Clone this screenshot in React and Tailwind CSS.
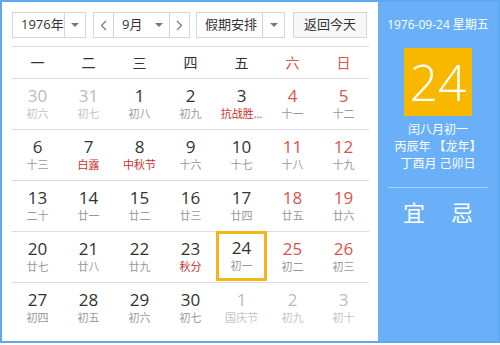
import React from "react";

const weekdays = ["一", "二", "三", "四", "五", "六", "日"];

// n: day number, l: lunar text, m: muted (other month), f: festival (red lunar)
const rows = [
    [{ n: 30, l: "初六", m: true }, { n: 31, l: "初七", m: true }, { n: 1, l: "初八" }, { n: 2, l: "初九" }, { n: 3, l: "抗战胜…", f: true }, { n: 4, l: "十一" }, { n: 5, l: "十二" }],
    [{ n: 6, l: "十三" }, { n: 7, l: "白露", f: true }, { n: 8, l: "中秋节", f: true }, { n: 9, l: "十六" }, { n: 10, l: "十七" }, { n: 11, l: "十八" }, { n: 12, l: "十九" }],
    [{ n: 13, l: "二十" }, { n: 14, l: "廿一" }, { n: 15, l: "廿二" }, { n: 16, l: "廿三" }, { n: 17, l: "廿四" }, { n: 18, l: "廿五" }, { n: 19, l: "廿六" }],
    [{ n: 20, l: "廿七" }, { n: 21, l: "廿八" }, { n: 22, l: "廿九" }, { n: 23, l: "秋分", f: true }, { n: 24, l: "初一", today: true }, { n: 25, l: "初二" }, { n: 26, l: "初三" }],
    [{ n: 27, l: "初四" }, { n: 28, l: "初五" }, { n: 29, l: "初六" }, { n: 30, l: "初七" }, { n: 1, l: "国庆节", m: true }, { n: 2, l: "初九", m: true }, { n: 3, l: "初十", m: true }],
];

const Caret = () => <span className="w-0 h-0 border-l-[4px] border-r-[4px] border-t-[4px] border-l-transparent border-r-transparent border-t-[#777]"></span>;

const DayCell = ({ d, col }) => {
    const weekend = col >= 5;
    let numColor = "text-[#333]";
    if (d.m) numColor = "text-[#bbb]";
    else if (weekend) numColor = "text-[#d9544f]";
    let lunarColor = "text-[#999]";
    if (d.m) lunarColor = "text-[#c4c4c4]";
    else if (d.f) lunarColor = "text-[#c9302c]";
    return (
        <div className={`flex flex-col items-center justify-center h-full ${d.today ? "border-[3px] border-[#f3b51a] -mt-px" : ""}`}>
            <div className={`text-[17px] leading-[20px] ${numColor}`}>{d.n}</div>
            <div className={`text-[11px] leading-[16px] whitespace-nowrap ${lunarColor}`}>{d.l}</div>
        </div>
    );
};

const App = () => {
    return (
        <div className="w-[500px] h-[345px] bg-white" style={{ fontFamily: '"Open Sans", "Noto Sans CJK SC", sans-serif' }}>
            <div className="w-[500px] h-[343px] border-2 border-[#5ea8f0] flex bg-white">
                {/* left: calendar */}
                <div className="w-[376px] pl-[10px] pr-[9px] pt-[10px] flex flex-col">
                    <div className="flex items-center h-[26px] text-[13px] text-[#333]">
                        <div className="w-[74px] h-[26px] border border-[#d6d6d6] flex items-center">
                            <span className="flex-1 pl-[8px]">1976年</span>
                            <span className="w-[21px] h-full border-l border-[#d6d6d6] flex items-center justify-center"><Caret /></span>
                        </div>
                        <div className="ml-[7px] w-[97px] h-[26px] border border-[#d6d6d6] flex items-center">
                            <span className="w-[20px] h-full border-r border-[#d6d6d6] flex items-center justify-center text-[#777]">
                                <svg width="7" height="11" viewBox="0 0 7 11"><path d="M6 1L1.5 5.5L6 10" fill="none" stroke="#777" strokeWidth="1.2" /></svg>
                            </span>
                            <span className="flex-1 flex items-center pl-[8px] gap-[13px]">9月<Caret /></span>
                            <span className="w-[20px] h-full border-l border-[#d6d6d6] flex items-center justify-center">
                                <svg width="7" height="11" viewBox="0 0 7 11"><path d="M1 1L5.5 5.5L1 10" fill="none" stroke="#777" strokeWidth="1.2" /></svg>
                            </span>
                        </div>
                        <div className="ml-[6px] w-[89px] h-[26px] border border-[#d6d6d6] flex items-center">
                            <span className="flex-1 pl-[8px]">假期安排</span>
                            <span className="w-[22px] h-full border-l border-[#d6d6d6] flex items-center justify-center"><Caret /></span>
                        </div>
                        <div className="ml-[8px] w-[74px] h-[26px] border border-[#d6d6d6] bg-[#f7f7f7] flex items-center justify-center">返回今天</div>
                    </div>

                    <div className="mt-[8px] border-t border-[#dcdcdc] grid grid-cols-7 h-[32px] items-center text-[14px]">
                        {weekdays.map((w, i) => (
                            <div key={w} className={`text-center ${i >= 5 ? "text-[#d9544f]" : "text-[#333]"}`}>{w}</div>
                        ))}
                    </div>

                    {rows.map((row, ri) => (
                        <div key={ri} className={`grid grid-cols-7 border-t border-[#dcdcdc] ${ri === 4 ? "h-[50px]" : "h-[51px]"}`}>
                            {row.map((d, ci) => <DayCell key={ci} d={d} col={ci} />)}
                        </div>
                    ))}
                </div>

                {/* right: detail panel */}
                <div className="flex-1 bg-[#6ab0f8] flex flex-col items-center text-white">
                    <div className="mt-[14px] text-[12px] leading-[18px]">1976-09-24 星期五</div>
                    <div className="mt-[14px] w-[68px] h-[68px] bg-[#f9b800] flex items-center justify-center text-[50px] font-light leading-none">24</div>
                    <div className="mt-[5px] text-[12px] leading-[17px] text-center">
                        <div>闰八月初一</div>
                        <div>丙辰年 【龙年】</div>
                        <div>丁酉月 己卯日</div>
                    </div>
                    <div className="mt-[15px] w-[100px] border-t border-[#a9d2fb]"></div>
                    <div className="mt-[10px] flex gap-[26px] text-[22px] leading-[28px]">
                        <span>宜</span>
                        <span>忌</span>
                    </div>
                </div>
            </div>
        </div>
    );
};

export default App;
